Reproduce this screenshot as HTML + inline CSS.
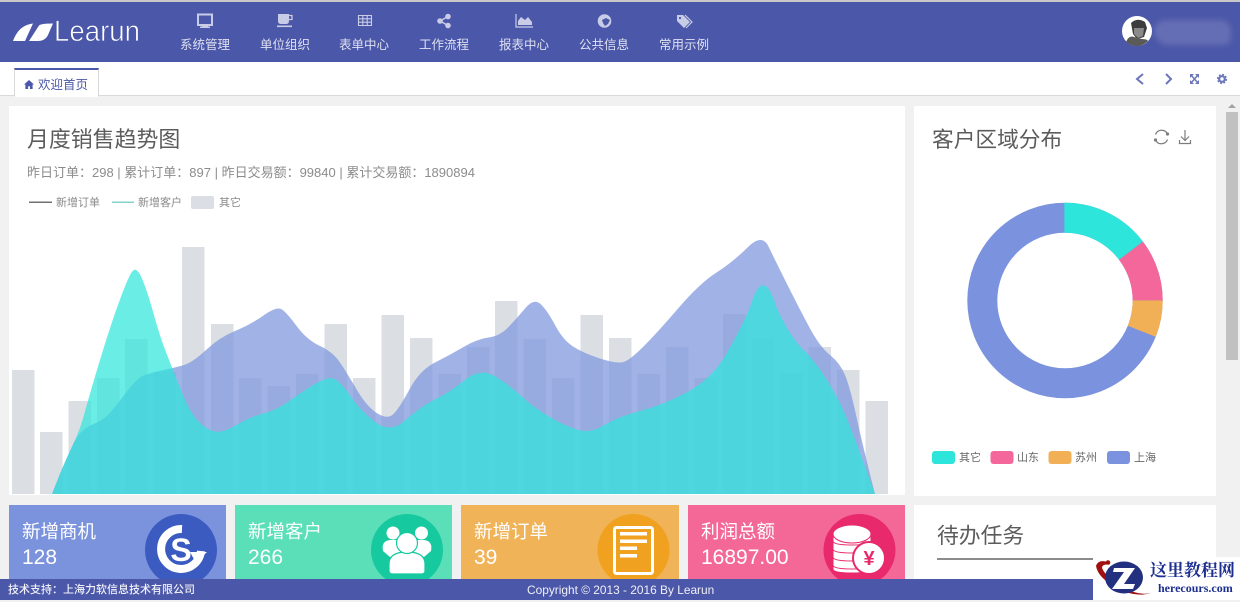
<!DOCTYPE html>
<html lang="zh-CN">
<head>
<meta charset="utf-8">
<title>Learun</title>
<style>
html,body{margin:0;padding:0;width:1240px;height:600px;overflow:hidden;background:#f1f1f1;font-family:"Liberation Sans","Noto Sans CJK SC",sans-serif}
.a{position:absolute;white-space:nowrap}
#hd{left:0;top:2px;width:1240px;height:60px;background:#4b57a8}
.nv{position:absolute;top:37px;width:80px;text-align:center;font-size:12.5px;line-height:16px;color:#dfe1f2}
#tabs{left:0;top:62px;width:1240px;height:33px;background:#fff;border-bottom:1px solid #d9d9d9}
#tab{left:14px;top:68px;width:83px;height:26px;background:#fff;border:1px solid #d8d8d8;border-top:2px solid #4b57a8;border-bottom:1px solid #fff;font-size:12.5px;line-height:28px;color:#4b57a8}
.p{position:absolute;background:#fff}
.t{position:absolute;font-size:22px;line-height:30px;color:#5c5c5c;white-space:nowrap}
.l{position:absolute;font-size:11px;line-height:14px;color:#8a8a8a;white-space:nowrap}
.c{position:absolute;top:505px;height:74px;overflow:hidden}
.c b{position:absolute;left:13px;top:15px;font-weight:400;font-size:18.5px;line-height:24px;color:#fff;white-space:nowrap}
.c i{position:absolute;left:13px;top:41px;font-style:normal;font-size:21px;line-height:24px;color:#fff;white-space:nowrap}
.c svg{position:absolute;left:0;top:0}
#ft{left:0;top:579px;width:1240px;height:21px;background:#4b57a8;color:#f0f0f8;font-size:12px;line-height:23px}
#wm{left:1093px;top:557px;width:147px;height:43px;background:#fff}
</style>
</head>
<body>
<div class="a" style="left:0;top:0;width:1240px;height:2px;background:#c9c9c9"></div>
<div class="a" id="hd"></div>

<svg class="a" style="left:0;top:0" width="150" height="62">
<path d="M13,41C16,33 21,25 33,23.500L25,41Z" fill="#fff"/>
<path d="M29,41L39,25.500Q41,23.500 53,23.500L48,35Q45,41 38,41Z" fill="#fff"/>
<text x="54" y="41" font-family="Liberation Sans" font-size="30" textLength="86" lengthAdjust="spacingAndGlyphs" fill="#fff" stroke="#4b57a8" stroke-width=".7">Learun</text>
</svg>

<div class="nv" style="left:165px">系统管理</div>
<div class="nv" style="left:245px">单位组织</div>
<div class="nv" style="left:324px">表单中心</div>
<div class="nv" style="left:404px">工作流程</div>
<div class="nv" style="left:484px">报表中心</div>
<div class="nv" style="left:564px">公共信息</div>
<div class="nv" style="left:644px">常用示例</div>

<svg class="a" style="left:0;top:0" width="760" height="40" fill="#c9cce6">
<path d="M198,14.500H212V25H198Z" fill="none" stroke="#c9cce6" stroke-width="2"/><rect x="202" y="25" width="6" height="2"/><rect x="200" y="26.500" width="10" height="1.500"/>
<path d="M278,14H289V21Q289,24 286,24H281Q278,24 278,21Z"/><path d="M289,15.500H292V19.500H289" fill="none" stroke="#c9cce6" stroke-width="1.300"/><rect x="277" y="25.500" width="15" height="1.600"/>
<path d="M358.500,15.500H371.500V25.500H358.500ZM358.500,18.800H371.500M358.500,22.200H371.500M362.800,15.500V25.500M367.200,15.500V25.500" fill="none" stroke="#c9cce6" stroke-width="1.100"/>
<circle cx="440" cy="21" r="2.800"/><circle cx="448" cy="16.500" r="2.800"/><circle cx="448" cy="25.500" r="2.800"/><path d="M440,21L448,16.500M440,21L448,25.500" stroke="#c9cce6" stroke-width="1.500"/>
<path d="M516,14V27H533" fill="none" stroke="#c9cce6" stroke-width="1.200"/><path d="M518,25V21L521,17L525,20L528,17L532,22V25Z"/>
<circle cx="604.500" cy="21" r="6.800"/><path d="M602,20L606,18L610,20L608,24L605,26L603,23Z" fill="#4b57a8"/>
<path d="M677,15H683L690,22L684,28L677,21Z"/><path d="M685,15L692,22L686,28" fill="none" stroke="#c9cce6" stroke-width="1.200"/><circle cx="680" cy="18" r="1.100" fill="#4b57a8"/>
</svg>

<div class="a" style="left:1154px;top:20px;width:77px;height:25px;background:#7e86c2;border-radius:12px 12px 8px 16px;filter:blur(3px);opacity:.5"></div>
<svg class="a" style="left:1122px;top:16px" width="30" height="30">
<circle cx="15" cy="15" r="15" fill="#fff"/>
<path d="M9,7Q15,1 23,6L25,12L22,21L15,23L11,18Z" fill="#3d3d3d"/>
<path d="M12,12H22L21,20L16,22L12,18Z" fill="#8a8a8a"/>
<path d="M4,26Q7,19 12,21L20,23Q25,23 26,25Q20,31 13,30Q8,29 4,26Z" fill="#5a5a58"/>
</svg>

<div class="a" id="tabs"></div>
<div class="a" id="tab"><svg style="position:absolute;left:9px;top:10px" width="10" height="9"><path d="M5,0L10,4.500H8.600V9H5.900V6.300H4.100V9H1.400V4.500H0Z" fill="#4b57a8"/></svg><span style="position:absolute;left:23px;top:1px">欢迎首页</span></div>

<svg class="a" style="left:1125px;top:68px" width="110" height="22" fill="none" stroke="#6b77ba" stroke-width="2">
<path d="M18,6L12,11L18,16"/>
<path d="M41,6L46,11L41,16"/>
<path d="M66,7L73,15M73,7L66,15" stroke-width="1.500"/><path d="M65,6H69L65,10ZM74,6V10L70,6ZM65,16V12L69,16ZM74,16H70L74,12Z" fill="#6b77ba" stroke="none"/>
<circle cx="97" cy="11" r="2.800" stroke-width="2.200"/><circle cx="97" cy="11" r="4.200" stroke-dasharray="1.800 1.500" stroke-width="1.800"/>
</svg>

<div class="p" style="left:9px;top:106px;width:896px;height:389px"></div>
<div class="p" style="left:914px;top:106px;width:302px;height:390px"></div>
<div class="p" style="left:914px;top:505px;width:302px;height:80px"></div>

<div class="t" style="left:27px;top:125px;font-size:21.900px">月度销售趋势图</div>
<div class="a" style="left:27px;top:164px;font-size:13px;line-height:18px;color:#8c8c8c">昨日订单：298 | 累计订单：897 | 昨日交易额：99840 | 累计交易额：1890894</div>
<svg class="a" style="left:0;top:190px" width="240" height="24">
<rect x="29" y="11.500" width="23" height="1.500" fill="#707070"/>
<rect x="112" y="11.500" width="22" height="1.500" fill="#86d2cc"/>
<rect x="191" y="6" width="23" height="13" rx="2" fill="#dbdfe5"/>
</svg>
<div class="l" style="left:56px;top:196px">新增订单</div>
<div class="l" style="left:138px;top:196px">新增客户</div>
<div class="l" style="left:219px;top:196px">其它</div>

<svg class="a" style="left:0;top:230px" width="910" height="270" viewBox="0 230 910 270">
<g fill="#dbdfe4">
<rect x="12" y="370" width="22.500" height="124"/>
<rect x="40" y="432" width="22.500" height="62"/>
<rect x="68.500" y="401" width="22.500" height="93"/>
<rect x="97" y="378" width="22.500" height="116"/>
<rect x="125" y="339" width="22.500" height="155"/>
<rect x="153.500" y="372" width="22.500" height="122"/>
<rect x="182" y="247" width="22.500" height="247"/>
<rect x="211" y="324" width="22.500" height="170"/>
<rect x="239" y="378" width="22.500" height="116"/>
<rect x="267.500" y="386" width="22.500" height="108"/>
<rect x="296" y="374" width="22.500" height="120"/>
<rect x="324.500" y="324" width="22.500" height="170"/>
<rect x="353" y="378" width="22.500" height="116"/>
<rect x="381.500" y="315" width="22.500" height="179"/>
<rect x="410" y="338" width="22.500" height="156"/>
<rect x="438.500" y="374" width="22.500" height="120"/>
<rect x="467" y="347" width="22.500" height="147"/>
<rect x="495" y="301" width="22.500" height="193"/>
<rect x="523.500" y="339" width="22.500" height="155"/>
<rect x="552" y="378" width="22.500" height="116"/>
<rect x="580.500" y="315" width="22.500" height="179"/>
<rect x="609" y="338" width="22.500" height="156"/>
<rect x="637.500" y="374" width="22.500" height="120"/>
<rect x="666" y="347" width="22.500" height="147"/>
<rect x="694.500" y="378" width="22.500" height="116"/>
<rect x="723" y="314" width="22.500" height="180"/>
<rect x="751.500" y="339" width="22.500" height="155"/>
<rect x="780" y="373" width="22.500" height="121"/>
<rect x="808.500" y="347" width="22.500" height="147"/>
<rect x="837" y="370" width="22.500" height="124"/>
<rect x="865.500" y="401" width="22.500" height="93"/>
</g>
<path fill="#859cdf" fill-opacity=".78" d="M52,494L59.500,475Q67,457 73.500,443.500Q80,430 91.500,425Q103,420 108,415Q113,410 125,394Q137,378 143.500,375.500Q150,373 161.500,370.500Q173,368 182.500,365.500Q192,363 206,350Q220,337 235,331Q250,325 263.500,315.500Q277,306 282,309.500Q287,313 297,326.500Q307,340 320,346Q333,352 340,362.500Q347,373 357,390Q367,407 377.500,413.500Q388,420 394,413.500Q400,407 410,388.500Q420,370 435,362.500Q450,355 463.500,347Q477,339 488.500,337.500Q500,336 508.500,327Q517,318 525.500,308Q534,298 540.500,304Q547,310 555,325Q563,340 573,346.500Q583,353 600,358.500Q617,364 623.500,362Q630,360 643.500,346.500Q657,333 678.500,308Q700,283 716.500,272.500Q733,262 747.500,247.500Q762,233 768.500,246.500Q775,260 787.500,285Q800,310 810,328.500Q820,347 830,355Q840,363 845,375Q850,387 856.500,417Q863,447 875,494Z"/>
<path fill="#2de5db" fill-opacity=".71" d="M52,494L59.500,475Q67,457 73.500,443.500Q80,430 85,411.500Q90,393 100,360Q110,327 118.500,303.500Q127,280 131.500,272.500Q136,265 141.500,277.500Q147,290 153.500,313.500Q160,337 166.500,353.500Q173,370 181.500,391.500Q190,413 198.500,421.500Q207,430 215,431.500Q223,433 236.500,425Q250,417 263.500,413.500Q277,410 288.500,401.500Q300,393 315,384Q330,375 336.500,380Q343,385 351.500,397.500Q360,410 375,422Q390,434 405,420.500Q420,407 435,399.500Q450,392 465,380Q480,368 493.500,375.500Q507,383 520,395Q533,407 548,416Q563,425 576.500,429.500Q590,434 603.500,425.500Q617,417 640,411Q663,405 686.500,392.500Q710,380 723.500,358.500Q737,337 750,307.500Q763,263 776.500,307.500Q790,337 803.500,350Q817,363 830,385Q843,407 851.500,430Q860,453 867.500,473L875,494Z"/>
</svg>

<div class="t" style="left:932px;top:125px;font-size:21.700px">客户区域分布</div>
<svg class="a" style="left:1150px;top:126px" width="48" height="22" fill="none" stroke="#7d7d7d" stroke-width="1.200">
<path d="M5.500,8.500A6.500,6.500 0 0 1 17.500,8M17.500,13.500A6.500,6.500 0 0 1 5.500,14"/><circle cx="5.500" cy="14" r="1" fill="#7d7d7d"/><circle cx="17.500" cy="8" r="1" fill="#7d7d7d"/>
<path d="M35,4V14M31,10.500L35,14.500L39,10.500M29.500,14V17.500H40.500V14"/>
</svg>

<svg class="a" style="left:960px;top:195px" width="210" height="211" fill="none" stroke-width="30">
<g transform="rotate(-90 105 105.500)">
<circle cx="105" cy="105.500" r="82.700" pathLength="360" stroke="#7b92df"/>
<circle cx="105" cy="105.500" r="82.700" pathLength="360" stroke="#2de5db" stroke-dasharray="53 307"/>
<circle cx="105" cy="105.500" r="82.700" pathLength="360" stroke="#f4679a" stroke-dasharray="37 323" stroke-dashoffset="-53"/>
<circle cx="105" cy="105.500" r="82.700" pathLength="360" stroke="#f1b055" stroke-dasharray="22 338" stroke-dashoffset="-90"/>
</g>
</svg>

<svg class="a" style="left:930px;top:448px" width="205" height="20">
<rect x="2" y="3" width="23" height="13" rx="3" fill="#2de5db"/>
<rect x="60.500" y="3" width="23" height="13" rx="3" fill="#f4679a"/>
<rect x="118.500" y="3" width="23" height="13" rx="3" fill="#f1b055"/>
<rect x="177" y="3" width="23" height="13" rx="3" fill="#7b92df"/>
</svg>
<div class="l" style="left:959px;top:451px;color:#666">其它</div>
<div class="l" style="left:1017px;top:451px;color:#666">山东</div>
<div class="l" style="left:1075px;top:451px;color:#666">苏州</div>
<div class="l" style="left:1134px;top:451px;color:#666">上海</div>

<div class="t" style="left:937px;top:521px;font-size:21.800px">待办任务</div>
<div class="a" style="left:937px;top:558px;width:156px;height:2px;background:#8c8c8c"></div>

<div class="c" style="left:9px;width:217px;background:#7b92dd">
<b>新增商机</b><i>128</i>
<svg width="217" height="74">
<circle cx="172" cy="45" r="36" fill="#3b5bc1"/>
<path d="M173,24A20,20 0 1 0 192,46" fill="none" stroke="#fff" stroke-width="8"/>
<path d="M181,47H198L187,58Z" fill="#fff"/>
<text x="172" y="56" text-anchor="middle" font-family="Liberation Sans" font-weight="700" font-size="32" fill="#fff">S</text>
</svg>
</div>
<div class="c" style="left:235px;width:217px;background:#5adfb8">
<b>新增客户</b><i>266</i>
<svg width="217" height="74">
<circle cx="172" cy="45" r="36" fill="#17c99f"/>
<circle cx="158" cy="28" r="6.500" fill="#fff"/><circle cx="186.500" cy="28" r="6.500" fill="#fff"/>
<path d="M148,46Q146,36 155,35H162L166,50L155,52Z" fill="#fff"/>
<path d="M196,46Q198,36 189,35H182L178,50L189,52Z" fill="#fff"/>
<path d="M154,66V59Q154,47 172,47Q190,47 190,59V66Q190,69 186,69H158Q154,69 154,66Z" fill="#fff" stroke="#17c99f" stroke-width="1.200"/>
<circle cx="172" cy="38" r="10.500" fill="#fff" stroke="#17c99f" stroke-width="1.200"/>
</svg>
</div>
<div class="c" style="left:461px;width:218px;background:#f1b358">
<b>新增订单</b><i>39</i>
<svg width="218" height="74">
<circle cx="172.500" cy="45" r="36" fill="#f0a11f"/>
<rect x="153.500" y="22.500" width="38" height="46" rx="2" fill="none" stroke="#fff" stroke-width="3"/>
<g fill="#fff"><rect x="159" y="27" width="27" height="3.500"/><rect x="159" y="34.500" width="27" height="3.500"/><rect x="159" y="41.500" width="17" height="3.500"/><rect x="159" y="49" width="17" height="3.500"/></g>
</svg>
</div>
<div class="c" style="left:688px;width:217px;background:#f36896">
<b>利润总额</b><i>16897.00</i>
<svg width="217" height="74">
<circle cx="171.500" cy="45" r="36" fill="#e8296c"/>
<g fill="#fff" stroke="#e8296c" stroke-width="1">
<path d="M145,60V64Q145,68 164,68Q183,68 183,64V60Z"/><path d="M145,52V60Q145,64 164,64Q183,64 183,60V52Z"/><path d="M145,44V52Q145,56 164,56Q183,56 183,52V44Z"/><path d="M145,36V44Q145,48 164,48Q183,48 183,44V36Z"/><path d="M145,29V36Q145,40 164,40Q183,40 183,36V29Z"/>
<ellipse cx="164" cy="29" rx="19" ry="9"/>
</g>
<circle cx="181" cy="53" r="16" fill="#fff" stroke="#e8296c" stroke-width="2"/>
<text x="181" y="60" text-anchor="middle" font-family="Liberation Sans" font-weight="700" font-size="20" fill="#e8296c">¥</text>
</svg>
</div>

<div class="a" style="left:1217px;top:96px;width:23px;height:461px;background:#f1f1f1"></div>
<svg class="a" style="left:1226px;top:102px" width="14" height="8"><path d="M6,2L10,6H2Z" fill="#a3a3a3"/></svg>
<div class="a" style="left:1226px;top:112px;width:12px;height:248px;background:#c1c1c1"></div>

<div class="a" id="ft">
<span class="a" style="left:8px;top:0;font-size:11px;font-weight:500">技术支持：上海力软信息技术有限公司</span>
<span class="a" style="left:527px;top:0;font-size:11.900px">Copyright © 2013 - 2016 By Learun</span>
</div>

<div class="a" id="wm">
<svg style="position:absolute;left:0;top:0" width="60" height="43">
<path d="M15,5Q5,2 3,9Q5,21 24,31Q42,41 58,36Q44,39 28,29Q12,19 9,11Q9,7 15,7.500Z" fill="#a01010"/>
<circle cx="15" cy="5.500" r="2.300" fill="#a01010"/>
<ellipse cx="31" cy="20.500" rx="19" ry="16" fill="#23307f"/>
<path d="M21,11H42L31,27H42L40,32H19L31,15H20Z" fill="#fff"/>
</svg>
<span class="a" style="left:57px;top:3px;font-family:'Liberation Serif','Noto Serif CJK SC',serif;font-weight:700;font-size:17px;line-height:22px;color:#1d2f8f">这里教程网</span>
<span class="a" style="left:65px;top:23px;font-family:'Liberation Serif',serif;font-weight:700;font-size:12px;line-height:16px;color:#1d2f8f">herecours.com</span>
</div>
</body>
</html>
